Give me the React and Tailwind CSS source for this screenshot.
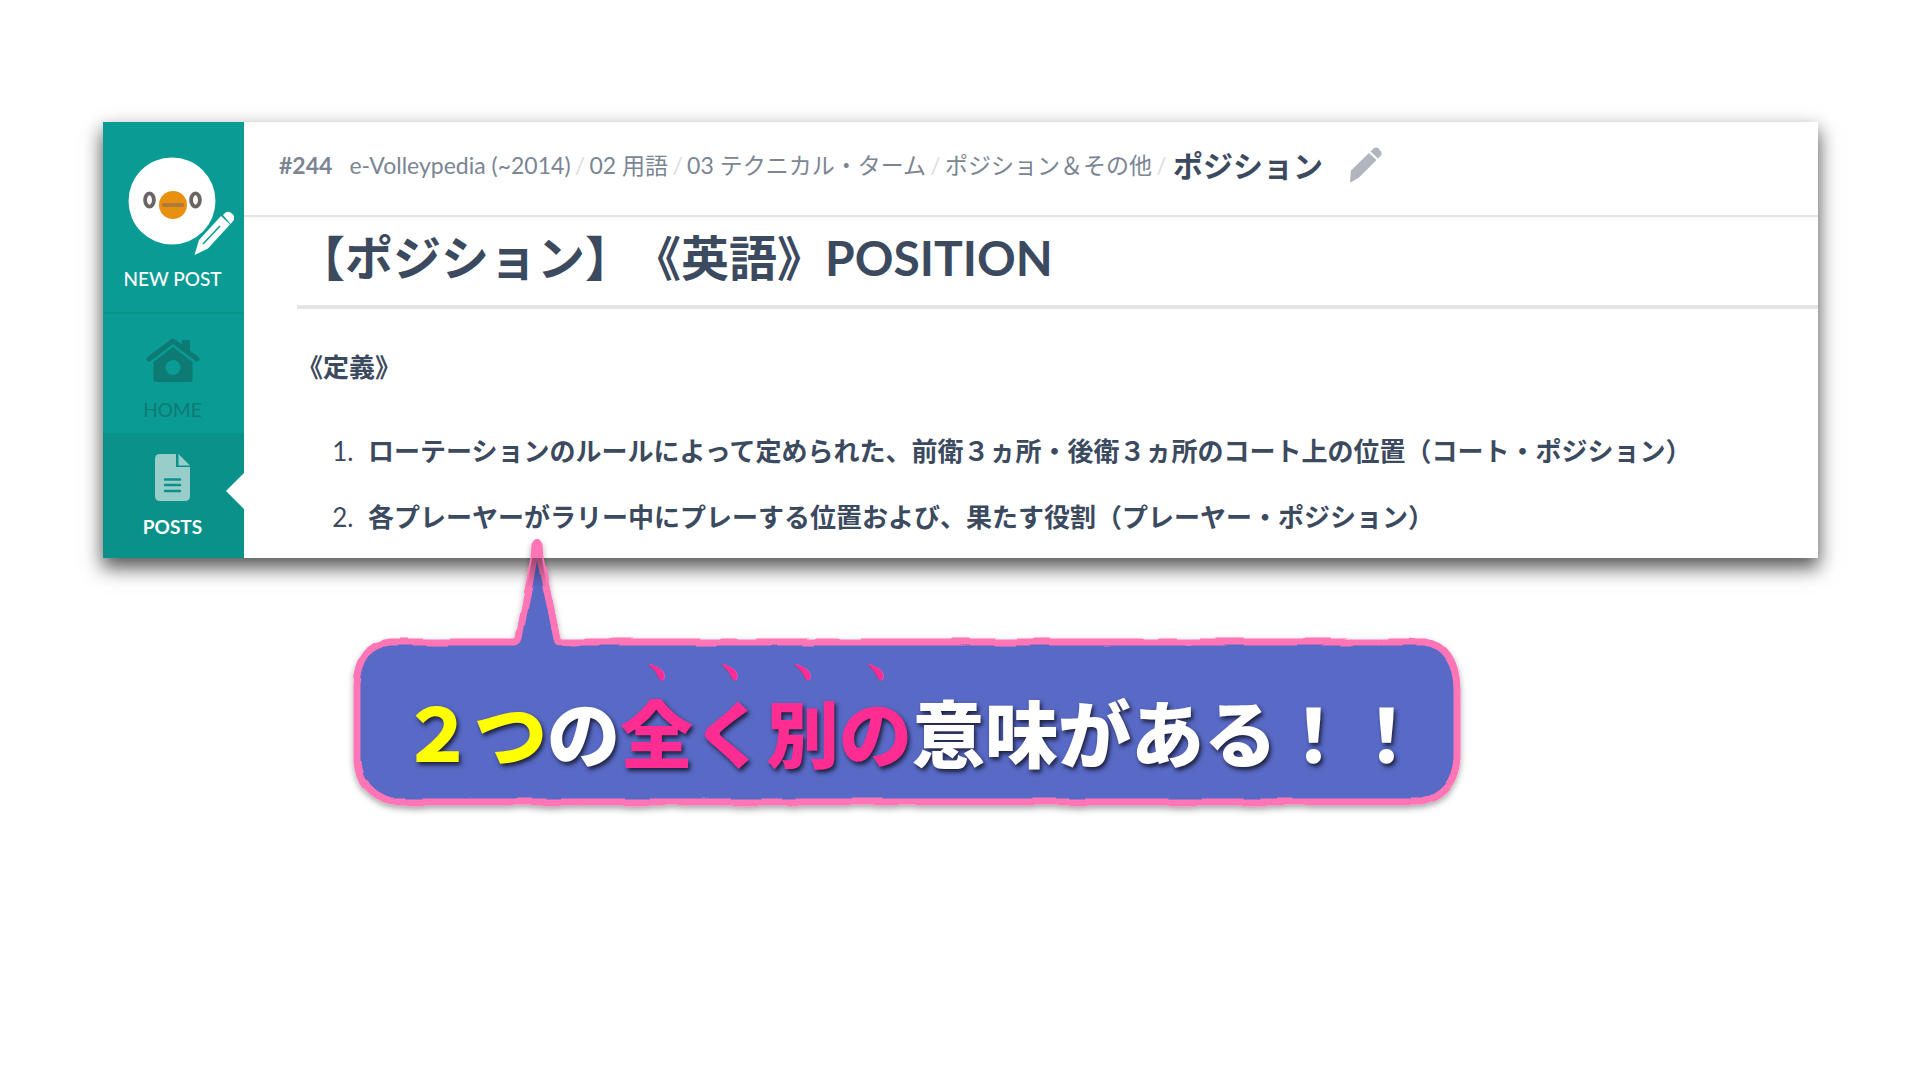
import React from 'react'

const breadcrumbs = ['e-Volleypedia (~2014)', '02 用語', '03 テクニカル・ターム', 'ポジション＆その他']

const definitions = [
  'ローテーションのルールによって定められた、前衛３ヵ所・後衛３ヵ所のコート上の位置（コート・ポジション）',
  '各プレーヤーがラリー中にプレーする位置および、果たす役割（プレーヤー・ポジション）'
]

const Avatar = () => (
  <svg width="106" height="100" viewBox="0 0 106 100" aria-hidden="true">
    <circle cx="44" cy="44" r="43.5" fill="#fff" />
    <g fill="none" stroke="#6b6566" strokeWidth="3.8">
      <ellipse cx="21.5" cy="43" rx="4.4" ry="6.6" />
      <ellipse cx="67.5" cy="43" rx="4.4" ry="6.6" />
    </g>
    <circle cx="45" cy="48" r="14" fill="#e8900f" />
    <rect x="34" y="46" width="22" height="4" rx="1.5" fill="#b07a3a" />
    {/* Pencil */}
    <g fill="#fff">
      <path d="M66.500 98l4.500-15 22-24 9 8.500-22 24z" />
      <path d="M95 58l2-2q4-3 8 1.500 3 4-.5 7l-2 2.500z" />
    </g>
    <path d="M75 87l17-18" stroke="#0a9b94" strokeWidth="1.500" />
  </svg>
)

const HomeIcon = () => (
  <svg width="54" height="46" viewBox="0 0 54 46" aria-hidden="true">
    <path d="M3 22L27 4l24 18" fill="none" stroke="#0d7a73" strokeWidth="5" strokeLinecap="round" strokeLinejoin="round" />
    <path d="M36 3h8v13l-8-6z" fill="#0d7a73" />
    <path fillRule="evenodd" d="M27 10l19.500 15v18q0 2-2 2h-35q-2 0-2-2V25zM27 23a7.500 7.500 0 1 0 0 15 7.500 7.500 0 1 0 0-15z" fill="#0d7a73" />
  </svg>
)

const PostIcon = () => (
  <svg width="36" height="47" viewBox="0 0 36 47" aria-hidden="true">
    <path d="M5 0h16v13h14v29q0 5-5 5H5q-5 0-5-5V5q0-5 5-5z" fill="#98cdc9" />
    <path d="M23.500 0L35 11.500H23.500z" fill="#98cdc9" />
    <path d="M10 25.500h15M10 31h15M10 37h15" stroke="#0a9189" strokeWidth="2.500" strokeLinecap="round" />
  </svg>
)

const EditIcon = () => (
  <svg width="32" height="36" viewBox="0 0 32 36" aria-hidden="true" fill="#b1b5be">
    <path d="M0 34l1-10.500L19 6l7.500 7L9 30.500 1.500 35q-1.500.5-1.500-1z" />
    <path d="M20.500 4.500l3-3q2.500-2 5 0l2.500 3q1.500 2.500-.5 4.500l-2.500 2.500z" />
  </svg>
)

const BubbleShape = () => (
  <svg className="absolute -left-5 -top-[133px] -z-10" width="1145" height="320" viewBox="-20 -133 1145 320" aria-hidden="true">
    <defs>
      <filter id="rough" x="-5%" y="-5%" width="110%" height="115%">
        <feTurbulence type="fractalNoise" baseFrequency="0.03" numOctaves="1" seed="4" result="noise" />
        <feDisplacementMap in="SourceGraphic" in2="noise" scale="4" xChannelSelector="R" yChannelSelector="G" />
        <feDropShadow dx="0" dy="3" stdDeviation="3" floodColor="#000" floodOpacity="0.35" />
      </filter>
      <linearGradient id="shade" x1="0" y1="0" x2="0" y2="1">
        <stop offset="0" stopColor="#000" stopOpacity="0.4" />
        <stop offset="1" stopColor="#000" stopOpacity="0" />
      </linearGradient>
    </defs>
    <path
      d="M34 -11H158Q162 -11 163 -15L178 -95L179 -108Q181 -113 183 -108L184 -95L201 -15Q202 -11 206 -11H1068Q1100 -7 1101 36V105Q1099 140 1066 149H34Q3 140 1 108V32Q3 -8 34 -11z"
      fill="#5869c6"
      stroke="#ff74b5"
      strokeWidth="7"
      strokeLinejoin="round"
      filter="url(#rough)"
    />
    <path d="M176 -95h10l5 30h-20z" fill="url(#shade)" />
  </svg>
)

const Sidebar = () => (
  <aside className="flex w-[141px] shrink-0 flex-col bg-[#0a9b94] text-center text-[19px] leading-[26px] text-white">
    <a href="#new" className="flex h-[192px] flex-col items-center border-b-2 border-[#0a938b] pt-[35px] pr-[2px] font-medium">
      <span className="pl-[16px]"><Avatar /></span>
      <span className="mt-[9px]">NEW POST</span>
    </a>
    <a href="#home" className="flex h-[119px] flex-col items-center pt-[23px] pr-[2px] text-[#0d7a73]">
      <HomeIcon />
      <span className="mt-[14px]">HOME</span>
    </a>
    <a href="#posts" className="relative flex grow flex-col items-center bg-[#0a9189] pt-[21px] pr-[2px] font-bold">
      <PostIcon />
      <span className="mt-[13px]">POSTS</span>
      <svg className="absolute right-0 top-[40px]" width="18" height="36" viewBox="0 0 18 36" aria-hidden="true">
        <path d="M18 0L0 18l18 18z" fill="#fff" />
      </svg>
    </a>
  </aside>
)

const Header = () => (
  <header className="flex h-[95px] items-center border-b-2 border-[#e4e4e5] pb-[7px] pl-[35px] text-[23px] leading-[40px] text-[#7b8594] shadow-[0_2px_3px_#00000008]">
    <span className="mr-[17px] font-bold">#244</span>
    <nav className="flex items-center">
      {breadcrumbs.map(item => (
        <React.Fragment key={item}>
          <a href="#category">{item}</a>
          <span className="w-[19px] text-center text-[#dcdee1]">/</span>
        </React.Fragment>
      ))}
    </nav>
    <h1 className="ml-[2px] text-[30px] font-bold text-[#3c4a60]">ポジション</h1>
    <button type="button" aria-label="編集" className="ml-[27px]">
      <EditIcon />
    </button>
  </header>
)

const Dotted = ({ children }) => (
  <span className="relative inline-block">
    <span aria-hidden="true" className="absolute inset-x-0 -top-[24px] text-center text-[24px] leading-[24px] [text-shadow:none]">﹅</span>
    {children}
  </span>
)

export default function App() {
  return (
    <main className="min-h-screen bg-white pt-[122px] pr-[102px] pl-[103px] font-['Lato','Noto_Sans_CJK_JP',sans-serif]">
      <section className="flex bg-white shadow-[0_9px_18px_1px_#000000a8]">
        <Sidebar />
        <div className="h-[436px] min-w-0 grow text-[#3c4a60]">
          <Header />
          <article className="pl-[53px]">
            <h2 className="h-[92px] border-b-4 border-[#e5e5e6] pt-[11px] text-[48px] leading-[60px] font-bold whitespace-nowrap [text-spacing-trim:space-all]">
              【ポジション】《英語》POSITION
            </h2>
            <p className="mt-[38px] text-[26px] leading-[40px] font-bold">《定義》</p>
            <ol className="mt-[31px] list-decimal pl-[63px] text-[26px] leading-[66px] marker:font-normal">
              {definitions.map(text => (
                <li key={text} className="pl-[8px] whitespace-nowrap">
                  <strong>{text}</strong>
                </li>
              ))}
            </ol>
          </article>
        </div>
      </section>

      <section className="relative z-10 mt-[95px] ml-[253px] h-[151px] w-fit px-[45px]">
        <BubbleShape />
        <p className="pt-[31px] text-[73px] leading-[100px] font-black whitespace-nowrap text-white [text-shadow:2px_3px_4px_#000000b0]">
          <span className="text-[#ffff00]">２つ</span>の
          <em className="text-[#ff2d92] not-italic">
            {[...'全く別の'].map(char => <Dotted key={char}>{char}</Dotted>)}
          </em>
          意味がある！！
        </p>
      </section>
    </main>
  )
}
